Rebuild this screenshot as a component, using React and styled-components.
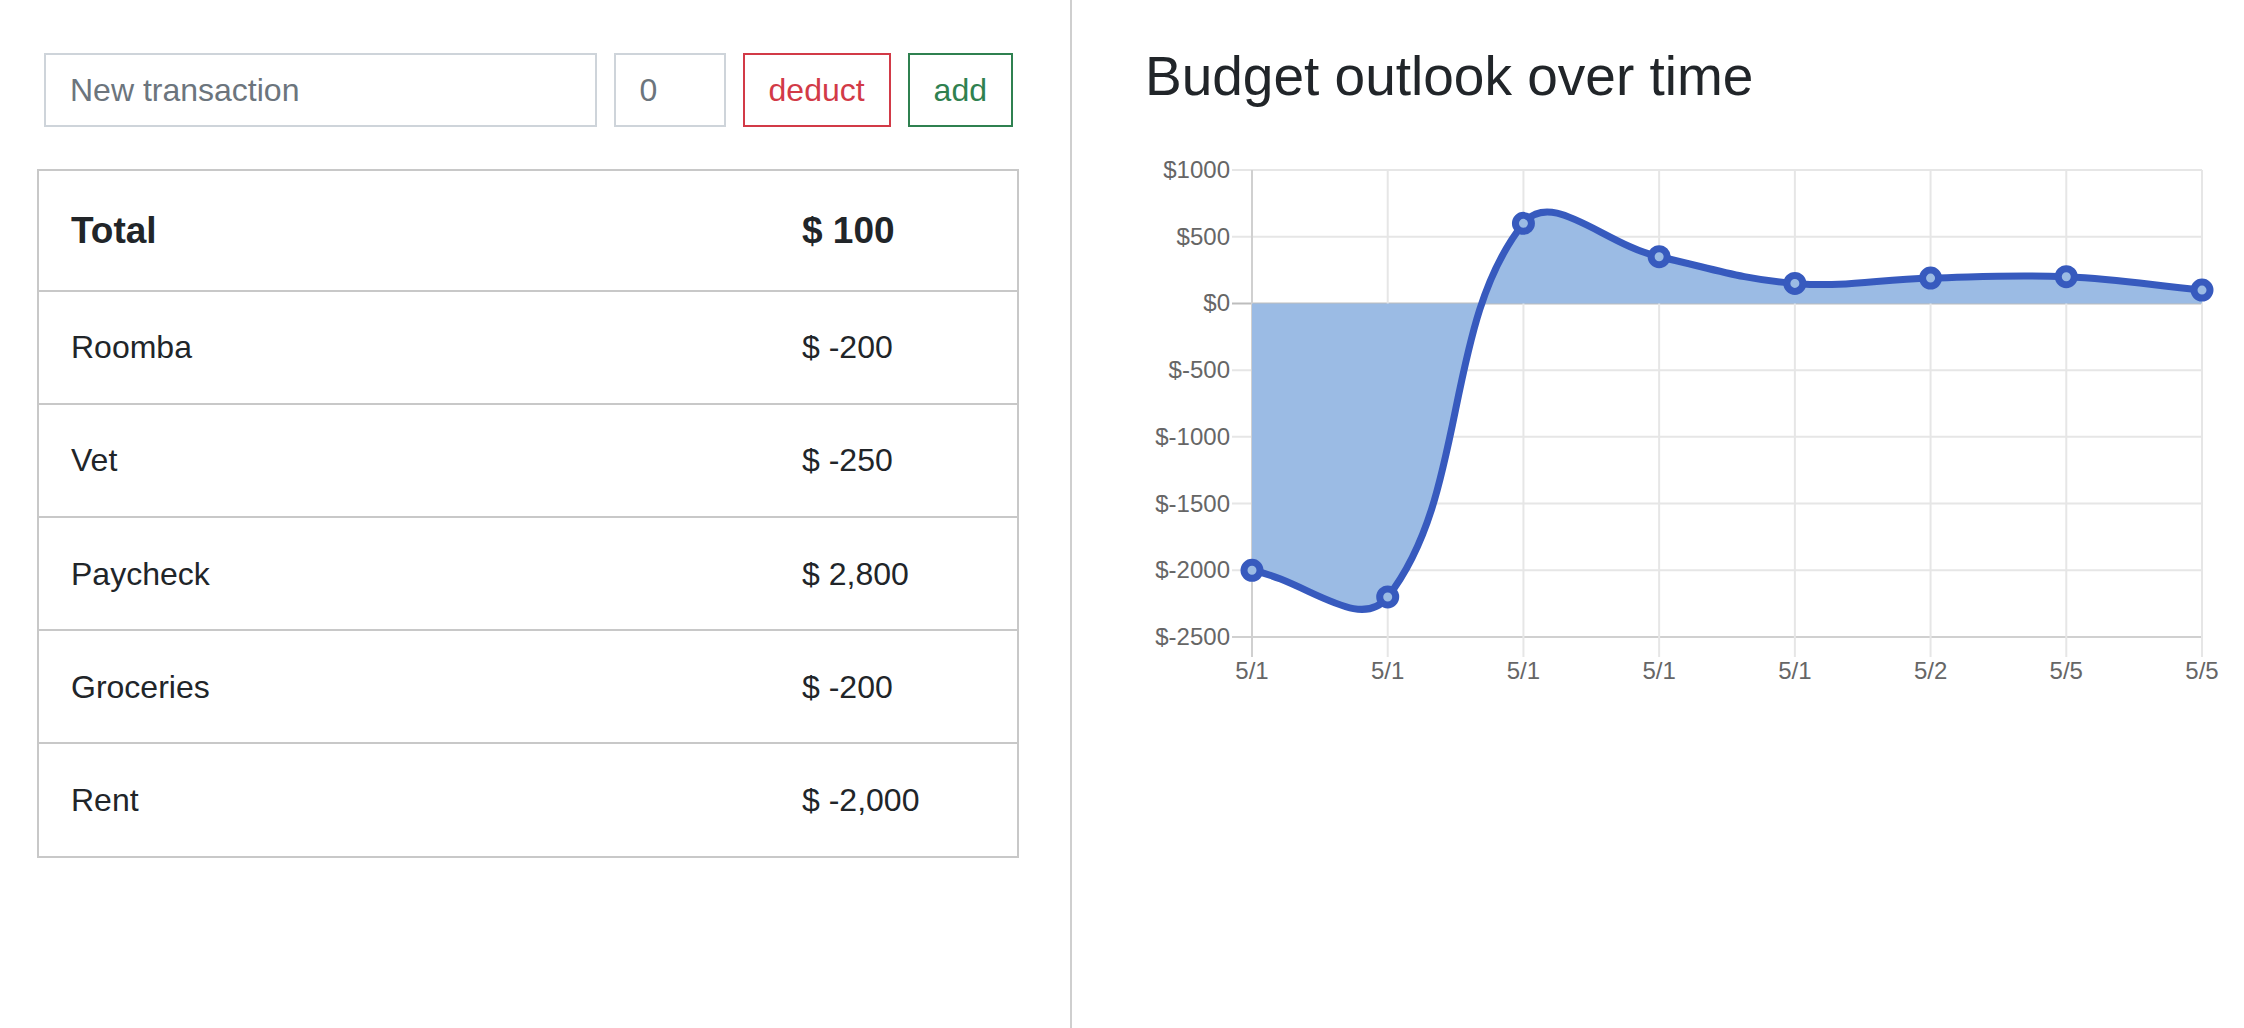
import styled, { createGlobalStyle } from 'styled-components'

const transactions = [
    { name: 'Roomba', amount: '-200' },
    { name: 'Vet', amount: '-250' },
    { name: 'Paycheck', amount: '2,800' },
    { name: 'Groceries', amount: '-200' },
    { name: 'Rent', amount: '-2,000' },
]

const outlook = [-2000, -2200, 600, 350, 150, 190, 200, 100]
const dates = ['5/1', '5/1', '5/1', '5/1', '5/1', '5/2', '5/5', '5/5']
const ticks = [1000, 500, 0, -500, -1000, -1500, -2000, -2500]

// plot area inside the svg
const plot = { left: 111, right: 1061, top: 30, bottom: 497 }
const yMax = 1000
const yMin = -2500

const px = i => plot.left + (i * (plot.right - plot.left)) / (outlook.length - 1)
const py = v => plot.top + ((yMax - v) / (yMax - yMin)) * (plot.bottom - plot.top)

// same spline as chart.js (tension .4)
const controlPoints = (pts, t = 0.4) =>
    pts.map((cur, i) => {
        const prev = pts[i - 1] || cur
        const next = pts[i + 1] || cur
        const d01 = Math.hypot(cur.x - prev.x, cur.y - prev.y)
        const d12 = Math.hypot(next.x - cur.x, next.y - cur.y)
        const s01 = d01 + d12 ? d01 / (d01 + d12) : 0
        const s12 = d01 + d12 ? d12 / (d01 + d12) : 0
        return {
            before: { x: cur.x - t * s01 * (next.x - prev.x), y: cur.y - t * s01 * (next.y - prev.y) },
            after: { x: cur.x + t * s12 * (next.x - prev.x), y: cur.y + t * s12 * (next.y - prev.y) },
        }
    })

const Chart = () => {
    const pts = outlook.map((v, i) => ({ x: px(i), y: py(v) }))
    const cps = controlPoints(pts)
    let line = `M${pts[0].x},${pts[0].y}`
    for (let i = 0; i < pts.length - 1; i++) {
        const a = cps[i].after
        const b = cps[i + 1].before
        line += ` C${a.x},${a.y} ${b.x},${b.y} ${pts[i + 1].x},${pts[i + 1].y}`
    }
    const zero = py(0)
    const area = `${line} L${pts[pts.length - 1].x},${zero} L${pts[0].x},${zero} Z`

    return (
        <ChartSvg width="1103" height="560" viewBox="0 0 1103 560">
            {ticks.map(v => (
                <g key={v}>
                    <line
                        x1={plot.left - 20} x2={plot.right} y1={py(v)} y2={py(v)}
                        stroke={v === 0 ? '#bdbdbd' : v === yMin ? '#d0d0d0' : '#e6e6e6'}
                        strokeWidth="2"
                    />
                    <AxisText x={plot.left - 22} y={py(v) + 8} textAnchor="end">${v}</AxisText>
                </g>
            ))}
            {dates.map((d, i) => (
                <g key={i}>
                    <line
                        x1={px(i)} x2={px(i)} y1={plot.top} y2={plot.bottom + 20}
                        stroke={i === 0 ? '#d0d0d0' : '#e6e6e6'}
                        strokeWidth="2"
                    />
                    <AxisText x={px(i)} y="539" textAnchor="middle">{d}</AxisText>
                </g>
            ))}
            <path d={area} fill="#9bbbe4" />
            <path d={line} fill="none" stroke="#375abe" strokeWidth="7" strokeLinejoin="round" />
            {pts.map((p, i) => (
                <circle key={i} cx={p.x} cy={p.y} r="8" fill="#9bbbe4" stroke="#375abe" strokeWidth="7" />
            ))}
        </ChartSvg>
    )
}

const App = () => {
    return (
        <>
            <GlobalStyle />
            <Page>
                <LeftPane>
                    <EntryForm onSubmit={e => e.preventDefault()}>
                        <Field $width="554px" placeholder="New transaction" />
                        <Field $width="112px" placeholder="0" />
                        <OutlineButton $tone="#d23a47">deduct</OutlineButton>
                        <OutlineButton $tone="#2f8150">add</OutlineButton>
                    </EntryForm>
                    <Ledger>
                        <tbody>
                            <tr>
                                <Cell $strong>Total</Cell>
                                <Cell $strong>$ 100</Cell>
                            </tr>
                            {transactions.map(t => (
                                <tr key={t.name}>
                                    <Cell>{t.name}</Cell>
                                    <Cell>$ {t.amount}</Cell>
                                </tr>
                            ))}
                        </tbody>
                    </Ledger>
                </LeftPane>
                <RightPane>
                    <Heading>Budget outlook over time</Heading>
                    <Chart />
                </RightPane>
            </Page>
        </>
    )
}

const GlobalStyle = createGlobalStyle`
body {
    margin: 0;
    font-family: "Liberation Sans", Arial, sans-serif;
    color: #212529;
    background: #fff;
}
`

const Page = styled.div`
display: flex;
min-height: 100vh;
`

const LeftPane = styled.section`
width: 1072px;
flex-shrink: 0;
box-sizing: border-box;
padding: 53px 51px 0 37px;
border-right: 2px solid #cfcfcf;
`

const EntryForm = styled.form`
display: flex;
gap: 17px;
margin: 0 6px 0 7px;
`

const Field = styled.input`
width: ${p => p.$width};
height: 74px;
box-sizing: border-box;
padding: 0 24px;
border: 2px solid #ced4da;
border-radius: 0;
font-family: inherit;
font-size: 32px;
color: #495057;
outline: none;
&::placeholder {
    color: #6c757d;
}
`

const OutlineButton = styled.button`
height: 74px;
box-sizing: border-box;
padding: 0 24px;
background: #fff;
border: 2px solid ${p => p.$tone};
border-radius: 0;
color: ${p => p.$tone};
font-family: inherit;
font-size: 32px;
cursor: pointer;
`

const Ledger = styled.table`
width: 100%;
margin-top: 42px;
border-collapse: collapse;
border: 2px solid #c8c8c8;
tr + tr {
    border-top: 2px solid #c8c8c8;
}
`

const Cell = styled.td`
padding: 31.6px 32px;
font-size: ${p => (p.$strong ? '37px' : '32px')};
font-weight: ${p => (p.$strong ? 700 : 400)};
line-height: 1.5;
&:last-child {
    width: 183px;
}
`

const RightPane = styled.section`
flex: 1;
padding-left: 73px;
`

const Heading = styled.h3`
margin: 43px 0 0;
font-size: 55px;
font-weight: 400;
line-height: 1.2;
`

const ChartSvg = styled.svg`
display: block;
margin: 31px 0 0 -4px;
overflow: visible;
`

const AxisText = styled.text`
font-family: "Liberation Sans", Arial, sans-serif;
font-size: 24px;
fill: #666;
`

export default App
